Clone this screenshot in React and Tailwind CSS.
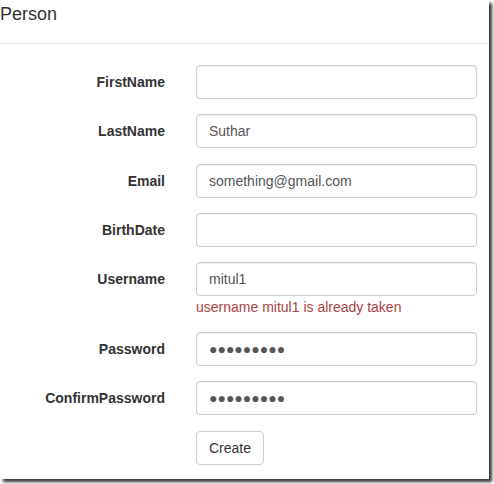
export default function App() {
  const fields = [
    { label: 'FirstName', value: '' },
    { label: 'LastName', value: 'Suthar', gap: 'mb-[16px]' },
    { label: 'Email', value: 'something@gmail.com' },
    { label: 'BirthDate', value: '' },
    { label: 'Username', value: 'mitul1', error: 'username mitul1 is already taken' },
    { label: 'Password', value: '●●●●●●●●●' },
    { label: 'ConfirmPassword', value: '●●●●●●●●●' },
  ];

  return (
    <div className="w-[494px] h-[484px] bg-white font-['Liberation_Sans',Arial,sans-serif] text-[#333]">
      <div className="w-[489px] h-[479px] bg-white shadow-[3px_3px_3px_rgba(0,0,0,0.8)] overflow-hidden">
        {/* Header */}
        <div className="h-[44px] pt-[3px] border-b border-[#e5e5e5]">
          <h2 className="text-[18px] leading-[22px]">Person</h2>
        </div>

        {/* Form */}
        <div className="pt-[21px]">
          {fields.map((f) => (
            <div key={f.label} className={`flex ${f.gap || 'mb-[15px]'}`}>
              <label className="w-[180px] pr-[15px] h-[34px] flex items-center justify-end text-[14px] font-bold">
                {f.label}
              </label>
              <div className="pl-[16px] w-[297px]">
                <input
                  type="text"
                  defaultValue={f.value}
                  readOnly
                  className="block w-[281px] h-[34px] px-[12px] border border-[#ccc] rounded-[4px] text-[14px] text-[#555] outline-none shadow-[inset_0_1px_1px_rgba(0,0,0,0.075)]"
                />
                {f.error && (
                  <div className="text-[14px] leading-[20px] text-[#a94442] mt-px">{f.error}</div>
                )}
              </div>
            </div>
          ))}
          <div className="flex pt-[1px]">
            <div className="w-[196px]" />
            <button className="h-[34px] px-[12px] border border-[#ccc] rounded-[4px] bg-white text-[14px] text-[#333]">
              Create
            </button>
          </div>
        </div>
      </div>
    </div>
  );
}
